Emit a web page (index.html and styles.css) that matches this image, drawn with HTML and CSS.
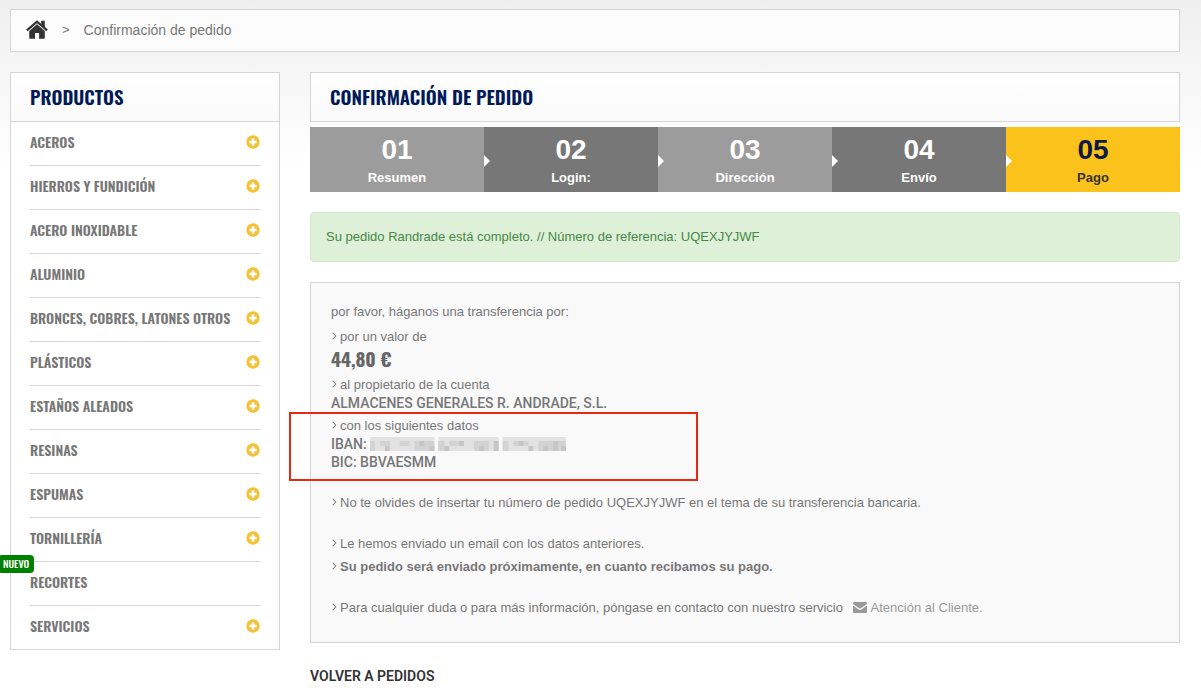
FILE: index.html
```
<!DOCTYPE html>
<html lang="es">
<head>
  <meta charset="utf-8">
  <title>Confirmación de pedido</title>
  <link rel="stylesheet" href="styles.css">
</head>
<body>
  <svg class="sprite" width="0" height="0" aria-hidden="true">
    <symbol id="plus" viewBox="0 0 14 14">
      <circle cx="7" cy="7" r="6.7" fill="#f6c233"/>
      <path d="M7 3.3v7.4M3.3 7h7.4" stroke="#fff" stroke-width="2.4"/>
    </symbol>
  </svg>

  <nav class="breadcrumb" aria-label="Ruta">
    <a class="home" href="#" aria-label="Inicio">
      <svg width="22" height="19" viewBox="0 0 22 19">
        <path d="M0.9 10.3L11 1.7l10.1 8.6" fill="none" stroke="#333" stroke-width="2.3"/>
        <path d="M15.2 0.8h3.6v7.4l-3.6-3z" fill="#333"/>
        <path d="M11 4.3l7.8 6.6V18a.8.8 0 0 1-.8.8h-4.9v-5.9H9v5.9H4a.8.8 0 0 1-.8-.8v-7.1z" fill="#333"/>
      </svg>
    </a>
    <span class="sep">&gt;</span>
    <span>Confirmación de pedido</span>
  </nav>

  <div class="columns">
    <aside class="sidebar">
      <h2 class="title">Productos</h2>
      <ul class="menu">
        <li><a href="#">Aceros</a><button aria-label="Abrir Aceros"><svg><use href="#plus"/></svg></button></li>
        <li><a href="#">Hierros y fundición</a><button aria-label="Abrir Hierros y fundición"><svg><use href="#plus"/></svg></button></li>
        <li><a href="#">Acero inoxidable</a><button aria-label="Abrir Acero inoxidable"><svg><use href="#plus"/></svg></button></li>
        <li><a href="#">Aluminio</a><button aria-label="Abrir Aluminio"><svg><use href="#plus"/></svg></button></li>
        <li><a href="#">Bronces, cobres, latones otros</a><button aria-label="Abrir Bronces"><svg><use href="#plus"/></svg></button></li>
        <li><a href="#">Plásticos</a><button aria-label="Abrir Plásticos"><svg><use href="#plus"/></svg></button></li>
        <li><a href="#">Estaños aleados</a><button aria-label="Abrir Estaños aleados"><svg><use href="#plus"/></svg></button></li>
        <li><a href="#">Resinas</a><button aria-label="Abrir Resinas"><svg><use href="#plus"/></svg></button></li>
        <li><a href="#">Espumas</a><button aria-label="Abrir Espumas"><svg><use href="#plus"/></svg></button></li>
        <li><a href="#">Tornillería</a><button aria-label="Abrir Tornillería"><svg><use href="#plus"/></svg></button></li>
        <li><a href="#">Recortes</a><span class="badge">Nuevo</span></li>
        <li><a href="#">Servicios</a><button aria-label="Abrir Servicios"><svg><use href="#plus"/></svg></button></li>
      </ul>
    </aside>

    <main class="content">
      <h1 class="title boxed">Confirmación de pedido</h1>
      <ol class="steps">
        <li><strong>01</strong><span>Resumen</span></li>
        <li><strong>02</strong><span>Login:</span></li>
        <li><strong>03</strong><span>Dirección</span></li>
        <li><strong>04</strong><span>Envío</span></li>
        <li class="current"><strong>05</strong><span>Pago</span></li>
      </ol>
      <p class="alert">Su pedido Randrade está completo. // Número de referencia: UQEXJYJWF</p>

      <div class="box">
        <p class="intro">por favor, háganos una transferencia por:</p>
        <p class="arrow">por un valor de</p>
        <p class="price">44,80 €</p>
        <p class="arrow">al propietario de la cuenta</p>
        <p class="data">ALMACENES GENERALES R. ANDRADE, S.L.</p>
        <div class="bank">
          <p class="arrow">con los siguientes datos</p>
          <p class="data">IBAN:
            <svg class="iban" width="196" height="14" viewBox="0 0 198 14" role="img" aria-label="IBAN oculto">
              <path fill="#e2e2e2" d="M0 0h65v14H0zM69 0h61v14H69zM134 0h64v14h-64z"/>
              <path fill="#d3d3d3" d="M0 4h5v10H0zM10 4h10v5H10zM30 4h10v5H30zM45 4h20v10H45zM69 4h6v10h-6zM80 4h15v5H80zM105 4h15v10h-15zM134 4h6v10h-6zM145 4h15v5h-15zM170 4h28v10h-28z"/>
              <path fill="#c6c6c6" d="M15 9h5v5h-5zM50 4h5v5h-5zM60 9h5v5h-5zM75 9h5v5h-5zM90 4h5v5h-5zM110 9h5v5h-5zM125 4h5v10h-5zM150 4h5v5h-5zM160 9h5v5h-5zM175 9h5v5h-5zM185 4h5v10h-5zM193 9h5v5h-5z"/>
            </svg>
          </p>
          <p class="data">BIC: BBVAESMM</p>
        </div>
        <p class="arrow group">No te olvides de insertar tu número de pedido UQEXJYJWF en el tema de su transferencia bancaria.</p>
        <p class="arrow group">Le hemos enviado un email con los datos anteriores.</p>
        <p class="arrow shipping"><b>Su pedido será enviado próximamente, en cuanto recibamos su pago.</b></p>
        <p class="arrow group">Para cualquier duda o para más información, póngase en contacto con nuestro servicio
          <a class="contact" href="#"><svg width="14" height="11" viewBox="0 0 14 11"><path d="M0 1.2Q0 0 1.2 0h11.6Q14 0 14 1.2q0 .9-1 1.6L8.2 6.1q-1.2.8-2.4 0L1 2.8Q0 2.1 0 1.2zM0 3.6l5.3 3.6q1.7 1.1 3.4 0L14 3.6v6.2q0 1.2-1.2 1.2H1.2Q0 11 0 9.8z" fill="#999"/></svg>Atención al Cliente.</a></p>
      </div>
      <a class="back" href="#">VOLVER A PEDIDOS</a>
    </main>
  </div>
</body>
</html>
```
FILE: styles.css
```
* {
  box-sizing: border-box;
}
body {
  margin: 0;
  padding: 9px 21px 12px 10px;
  font: 13px/18px "Liberation Sans", Arial, sans-serif;
  color: #777;
  background: #fff linear-gradient(#efefef, #fff 170px) no-repeat;
}
h1, h2, p, ul, ol {
  margin: 0;
  padding: 0;
}
ul, ol {
  list-style: none;
}
a {
  color: inherit;
  text-decoration: none;
}
.sprite {
  position: absolute;
}
.breadcrumb {
  display: flex;
  align-items: center;
  height: 43px;
  padding: 0 15px 2px;
  border: 1px solid #d6d4d4;
  background: #fcfcfc;
  font-size: 14px;
}
.home svg {
  display: block;
}
.sep {
  margin: 0 14px;
  font-size: 13px;
}
.columns {
  display: grid;
  grid-template-columns: 270px 1fr;
  gap: 30px;
  align-items: start;
  margin-top: 20px;
}
.title {
  padding: 8px 19px 10px;
  border-bottom: 1px solid #d6d4d4;
  background: linear-gradient(#fff, #fafafa);
  font: 600 19px/30px Oswald, "Liberation Sans", sans-serif;
  text-transform: uppercase;
  color: #001a57;
}
.boxed {
  border: 1px solid #d6d4d4;
}
.sidebar {
  border: 1px solid #d6d4d4;
  background: #fff;
}
.menu {
  padding: 0 19px;
}
.menu li {
  position: relative;
  display: flex;
  justify-content: space-between;
  align-items: center;
  height: 44px;
  padding-bottom: 3px;
  border-bottom: 1px solid #d6d4d4;
  font: 600 14px/20px Oswald, "Liberation Sans", sans-serif;
  text-transform: uppercase;
}
.menu li:last-child {
  height: 43px;
  border-bottom: 0;
}
.menu button {
  padding: 0 0 1px;
  border: 0;
  background: none;
  cursor: pointer;
}
.menu svg {
  display: block;
  width: 14px;
  height: 14px;
}
.badge {
  position: absolute;
  top: -7px;
  left: -32px;
  padding: 0 5px;
  border-radius: 4px;
  background: #008000;
  color: #fff;
  font-size: 10px;
  font-weight: 500;
  line-height: 18px;
}
.steps {
  display: grid;
  grid-template-columns: repeat(5, 1fr);
  margin: 5px 0 20px;
}
.steps li {
  position: relative;
  display: flex;
  flex-direction: column;
  align-items: center;
  height: 65px;
  padding-top: 8px;
  background: #9c9c9c;
  color: #fff;
  font-weight: bold;
}
.steps li:nth-child(even) {
  background: #777;
}
.steps strong {
  font-size: 28px;
  line-height: 30px;
}
.steps span {
  line-height: 26px;
}
.steps li + li::before {
  content: "";
  position: absolute;
  top: 28px;
  left: 0;
  border: solid transparent;
  border-width: 6px 0 6px 6px;
  border-left-color: #fff;
}
.steps .current {
  background: #fbc21b;
  color: #0c1a45;
}
.steps .current span {
  color: #333;
}
.alert {
  padding: 15px;
  border: 1px solid #d0e9c6;
  border-radius: 4px;
  background: #dff0d8;
  color: #468847;
}
.box {
  margin: 20px 0 23px;
  padding: 20px 20px 25px;
  border: 1px solid #d6d4d4;
  background: #f9f9f9;
}
.intro {
  margin-bottom: 7px;
}
.arrow::before {
  content: "";
  display: inline-block;
  width: 5px;
  height: 5px;
  margin-right: 3px;
  border: solid #777;
  border-width: 1px 1px 0 0;
  transform: translateX(-1px) rotate(45deg) scale(0.8);
  vertical-align: 2px;
}
.price {
  padding-bottom: 6px;
  font: bold 19px/24px Oswald, "Liberation Sans", sans-serif;
  color: #666;
}
.data {
  font-family: Roboto, "Liberation Sans", sans-serif;
  font-size: 14px;
  font-weight: 500;
}
.bank {
  width: 409px;
  margin-left: -42px;
  padding: 3px 40px 8px;
  border: 2px solid #e8280f;
}
.iban {
  vertical-align: -2px;
}
.group {
  margin-top: 23px;
}
.bank + .group {
  margin-top: 13px;
}
.shipping {
  margin-top: 5px;
}
.contact {
  margin-left: 6px;
  color: #999;
}
.contact svg {
  margin-right: 4px;
  vertical-align: -1px;
}
.back {
  color: #333;
  font: 600 14px/20px Roboto, "Liberation Sans", sans-serif;
}
```
